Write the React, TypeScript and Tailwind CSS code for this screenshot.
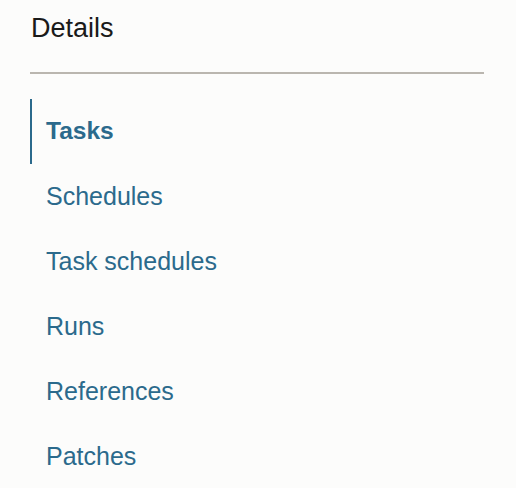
import React from 'react';

const items = ['Tasks', 'Schedules', 'Task schedules', 'Runs', 'References', 'Patches'];

const App: React.FC = () => {
  const active = 'Tasks';

  return (
    <div className="min-h-screen w-full bg-[#fcfcfb] pl-[30px] pr-[32px] pt-[14px] font-['Liberation_Sans',Arial,sans-serif]">
      <h2 className="text-[27px] leading-[28px] text-[#1a1a1a] pl-[1px]">Details</h2>
      <div className="mt-[30px] h-[2px] w-[454px] bg-[#bab6af]" />
      <nav className="mt-[25px] flex flex-col">
        {items.map((item) => (
          <a
            key={item}
            href="#"
            className={
              item === active
                ? 'flex h-[65px] items-center border-l-2 border-[#2b6a8c] pl-[14px] text-[24.5px] font-bold text-[#2b6a8c]'
                : 'flex h-[65px] items-center border-l-2 border-transparent pl-[14px] text-[25px] text-[#2b6a8c]'
            }
          >
            {item}
          </a>
        ))}
      </nav>
    </div>
  );
};

export default App;
